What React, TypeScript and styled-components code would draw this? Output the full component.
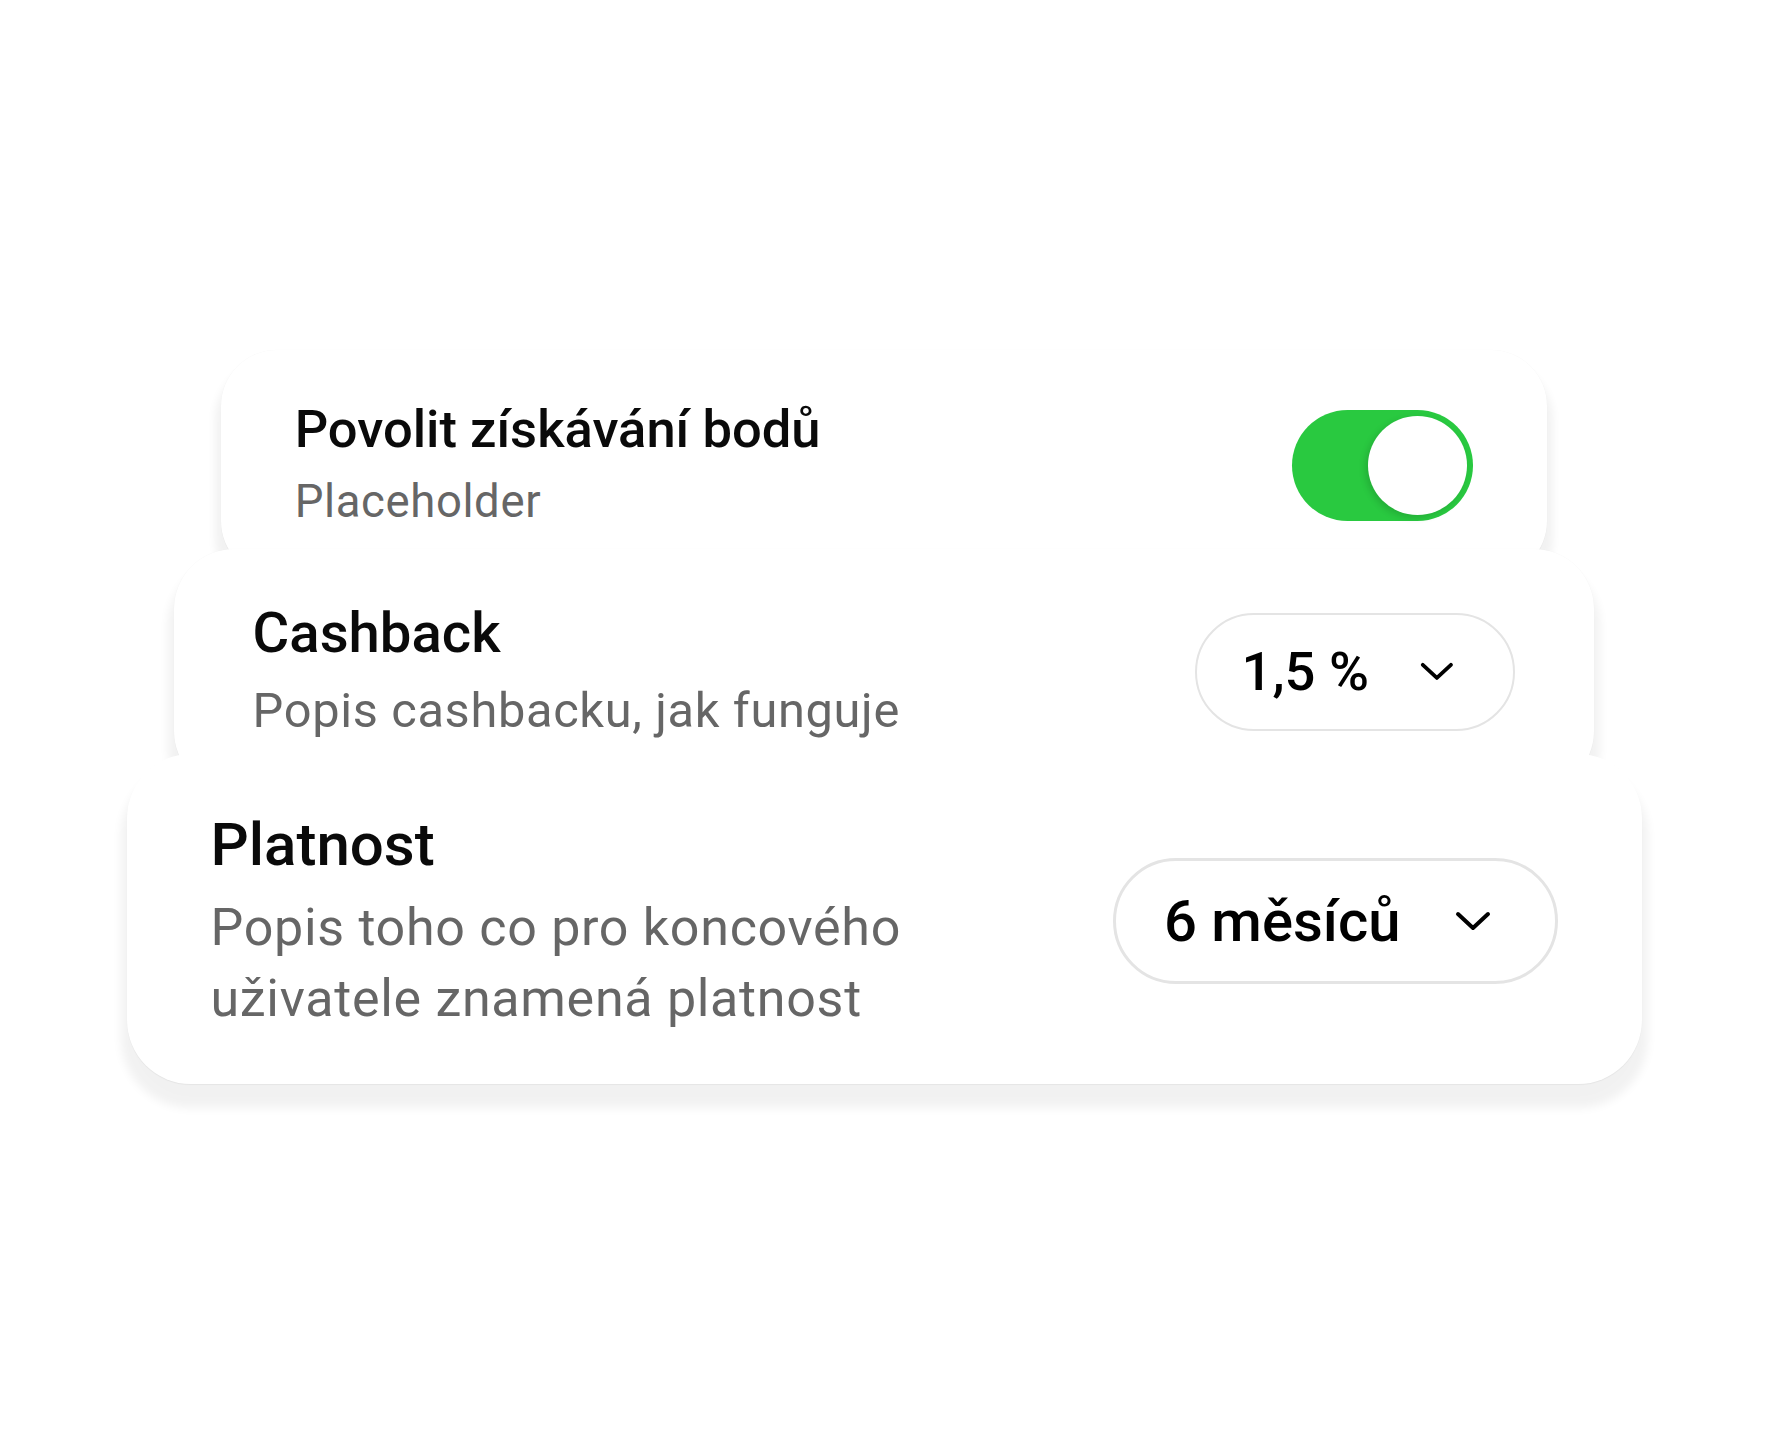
import React from "react"
import styled, {createGlobalStyle} from "styled-components"

const GlobalStyle = createGlobalStyle`
  html, body {
    margin: 0;
    padding: 0;
    background: #ffffff;
  }
  body {
    font-family: Roboto, "Liberation Sans", Arial, sans-serif;
    -webkit-font-smoothing: antialiased;
  }
`

type SettingProps = {
    title: string
    description: string
    scale: number
    layer: number
    overlap: number
    children: React.ReactNode
}

function SettingCard({title, description, scale, layer, overlap, children}: SettingProps) {
    return (
        <Card $scale={scale} $layer={layer} $overlap={overlap}>
            <TextBlock>
                <Title>{title}</Title>
                <Description>{description}</Description>
            </TextBlock>
            {children}
        </Card>
    )
}

function Chevron() {
    return (
        <ChevronIcon viewBox="0 0 36 20" width="36" height="20">
            <path d="M3 3 L18 17 L33 3" fill="none" stroke="#000" strokeWidth="4" strokeLinecap="round"
                  strokeLinejoin="round"/>
        </ChevronIcon>
    )
}

function Dropdown({value}: { value: string }) {
    return (
        <Select>
            <SelectValue>{value}</SelectValue>
            <Chevron/>
        </Select>
    )
}

export default function App() {
    return (
        <>
            <GlobalStyle/>
            <Page>
                <SettingCard title="Povolit získávání bodů" description="Placeholder" scale={0.875} layer={1}
                             overlap={0}>
                    <Toggle $on>
                        <Knob/>
                    </Toggle>
                </SettingCard>
                <SettingCard title="Cashback" description="Popis cashbacku, jak funguje" scale={0.9375} layer={2}
                             overlap={30}>
                    <Dropdown value="1,5 %"/>
                </SettingCard>
                <SettingCard title="Platnost" description="Popis toho co pro koncového uživatele znamená platnost"
                             scale={1} layer={3} overlap={37}>
                    <Dropdown value="6 měsíců"/>
                </SettingCard>
            </Page>
        </>
    )
}

const Page = styled.div`
  min-height: 1440px;
  box-sizing: border-box;
  padding-top: 350px;
  display: flex;
  flex-direction: column;
  align-items: center;
`
const Card = styled.div<{ $scale: number; $layer: number; $overlap: number }>`
  position: relative;
  z-index: ${p => p.$layer};
  zoom: ${p => p.$scale};
  margin-top: ${p => -p.$overlap}px;
  width: 1515px;
  box-sizing: border-box;
  padding: 54px 84px 50px;
  display: flex;
  align-items: center;
  justify-content: space-between;
  background: #ffffff;
  border-radius: 64px;
  box-shadow: 0 1px 1px rgba(0, 0, 0, 0.05), 0 18px 10px 6px rgba(0, 0, 0, 0.055);
`
const TextBlock = styled.div`
  display: flex;
  flex-direction: column;
  max-width: 780px;
`
const Title = styled.div`
  font-size: 60px;
  line-height: 74px;
  font-weight: 500;
  color: #0a0a0a;
  margin-bottom: 10px;
`
const Description = styled.div`
  font-size: 52px;
  line-height: 71px;
  font-weight: 400;
  color: #666666;
  letter-spacing: 0.7px;
`
const Select = styled.div`
  height: 126px;
  box-sizing: border-box;
  border: 3px solid #e4e4e4;
  border-radius: 63px;
  padding: 0 64px 0 48px;
  display: flex;
  align-items: center;
  gap: 54px;
  flex-shrink: 0;
`
const SelectValue = styled.span`
  font-size: 58px;
  font-weight: 500;
  color: #000;
  white-space: nowrap;
`
const ChevronIcon = styled.svg`
  display: block;
  flex-shrink: 0;
`
const Toggle = styled.div<{ $on?: boolean }>`
  width: 207px;
  height: 127px;
  box-sizing: border-box;
  padding: 7px;
  border-radius: 64px;
  background: ${p => p.$on ? "#29c940" : "#e5e5e5"};
  display: flex;
  justify-content: ${p => p.$on ? "flex-end" : "flex-start"};
  align-items: center;
  flex-shrink: 0;
`
const Knob = styled.div`
  width: 113px;
  height: 113px;
  border-radius: 50%;
  background: #ffffff;
  box-shadow: -3px 3px 8px rgba(0, 0, 0, 0.14);
`
